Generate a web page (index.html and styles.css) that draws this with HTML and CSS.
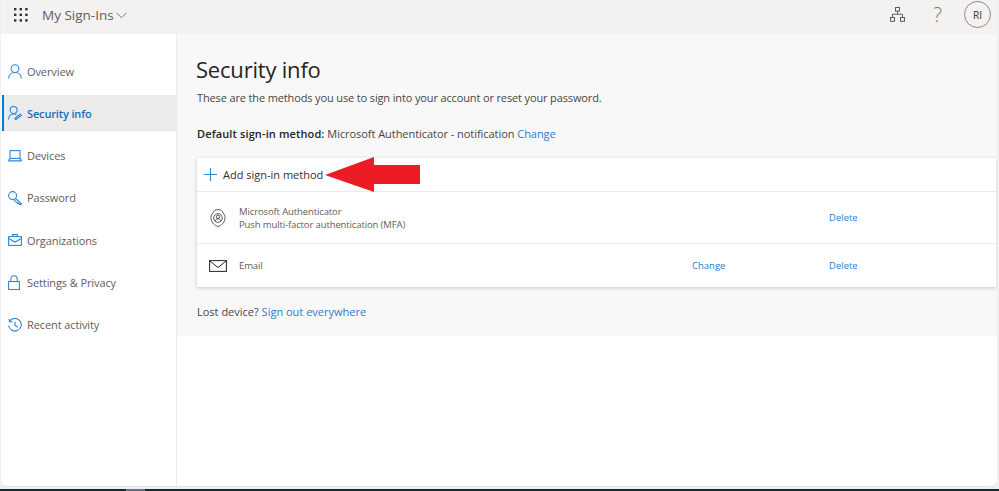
FILE: index.html
```html
<!DOCTYPE html>
<html lang="en">
<head>
    <meta charset="UTF-8">
    <meta name="viewport" content="width=device-width, initial-scale=1.0">
    <title>My Sign-Ins</title>
    <link rel="stylesheet" href="styles.css">
</head>
<body>
    <div class="window">
        <header class="topbar">
            <svg class="waffle" width="14" height="14" viewBox="0 0 14 14" fill="#323130">
                <rect x="0" y="0" width="2.4" height="2.4"/><rect x="5.6" y="0" width="2.4" height="2.4"/><rect x="11.2" y="0" width="2.4" height="2.4"/>
                <rect x="0" y="5.6" width="2.4" height="2.4"/><rect x="5.6" y="5.6" width="2.4" height="2.4"/><rect x="11.2" y="5.6" width="2.4" height="2.4"/>
                <rect x="0" y="11.2" width="2.4" height="2.4"/><rect x="5.6" y="11.2" width="2.4" height="2.4"/><rect x="11.2" y="11.2" width="2.4" height="2.4"/>
            </svg>
            <span class="app-name">My Sign-Ins</span>
            <svg class="chevron" width="11" height="7" viewBox="0 0 11 7" fill="none" stroke="#797775"><path d="M.6.8l4.9 4.9L10.4.8"/></svg>
            <div class="topbar-right">
                <svg width="15" height="15" viewBox="0 0 15 15" fill="none" stroke="#605e5c">
                    <rect x="5.5" y=".5" width="4" height="3.6"/><rect x=".5" y="10.5" width="4" height="3.8"/><rect x="10.5" y="10.5" width="4" height="3.8"/>
                    <path d="M7.5 4v3.2M2.5 10.5V7.2h10v3.3"/>
                </svg>
                <span class="help">?</span>
                <span class="avatar">RI</span>
            </div>
        </header>
        <div class="layout">
            <nav class="sidebar">
                <a class="nav-item">
                    <span class="nav-icon"><svg width="14" height="15" viewBox="0 0 14 15" fill="none" stroke="#2b88d8" stroke-width="1.1"><circle cx="7" cy="4.6" r="3.9"/><path d="M.7 14.5c0-3.6 2.600-6 6.300-6s6.300 2.400 6.300 6"/></svg></span>
                    Overview
                </a>
                <a class="nav-item active">
                    <span class="nav-icon"><svg width="15" height="15" viewBox="0 0 15 15" fill="none" stroke="#2b88d8" stroke-width="1.1"><circle cx="5.600" cy="4" r="3.500"/><path d="M.6 13.500c0-3.200 2-5.500 5-5.500 1.200 0 2.200.3 3 .9M7.500 13.800l6.500-4.800M7.500 13.800l-.5-1.500 5.800-4.500"/></svg></span>
                    Security info
                </a>
                <a class="nav-item">
                    <span class="nav-icon"><svg width="14" height="12" viewBox="0 0 14 12" fill="none" stroke="#2b88d8" stroke-width="1.1"><rect x="2" y=".6" width="10" height="7.800"/><path d="M.5 10.900h13M2 8.400L.5 10.900M12 8.400l1.500 2.500"/></svg></span>
                    Devices
                </a>
                <a class="nav-item">
                    <span class="nav-icon"><svg width="14" height="14" viewBox="0 0 14 14" fill="none" stroke="#2b88d8" stroke-width="1.1"><circle cx="4.600" cy="4.600" r="4"/><path d="M7.500 7.500l5.800 5.300v.6h-1.800l-1-1-.8.100-.3-1.100-.9-.1-2.500-2.400"/></svg></span>
                    Password
                </a>
                <a class="nav-item">
                    <span class="nav-icon"><svg width="14" height="12" viewBox="0 0 14 12" fill="none" stroke="#2b88d8" stroke-width="1.1"><rect x=".6" y="2.600" width="12.800" height="8.800"/><path d="M4.600 2.600V.6h4.800v2M.6 4.500L7 8l6.400-3.500"/></svg></span>
                    Organizations
                </a>
                <a class="nav-item">
                    <span class="nav-icon"><svg width="12" height="15" viewBox="0 0 12 15" fill="none" stroke="#2b88d8" stroke-width="1.1"><rect x=".6" y="6.500" width="10.800" height="8"/><path d="M2.800 6.500V4a3.200 3.200 0 0 1 6.400 0v2.500"/></svg></span>
                    Settings &amp; Privacy
                </a>
                <a class="nav-item">
                    <span class="nav-icon"><svg width="14" height="14" viewBox="0 0 14 14" fill="none" stroke="#2b88d8" stroke-width="1.1"><path d="M1.900 3a6.300 6.300 0 1 1-1.200 4.500M.9 .8l.6 3h3M7 3.500V7.300l2.600 1.900"/></svg></span>
                    Recent activity
                </a>
            </nav>
            <main class="content">
                <section class="summary">
                    <h1>Security info</h1>
                    <p class="intro">These are the methods you use to sign into your account or reset your password.</p>
                    <p class="default"><b>Default sign-in method:</b> Microsoft Authenticator - notification <a class="link">Change</a></p>
                    <div class="card">
                        <div class="add-row">
                            <svg width="13" height="13" viewBox="0 0 13 13" stroke="#2b88d8" stroke-width="1.1"><path d="M6.500 0v13M0 6.500h13"/></svg>
                            <span>Add sign-in method</span>
                        </div>
                        <div class="method method-tall">
                            <svg class="method-icon" width="18" height="18" viewBox="0 0 18 18" fill="none" stroke="#484644" stroke-width=".9"><path d="M9 .6C6.300.6 4.400 2 4 4 2.500 5.400 2 7 2 8.700c0 2.800 1.500 5.300 3.500 7 1 .9 2.300 1.700 3.500 1.700s2.500-.8 3.500-1.700c2-1.700 3.500-4.200 3.500-7 0-1.700-.5-3.300-2-4.700C13.600 2 11.700.6 9 .6z"/><circle cx="9" cy="9" r="4.300"/><circle cx="9" cy="7.800" r="1.700"/><path d="M6 12c.5-1.400 1.700-2.200 3-2.200s2.500.8 3 2.200"/></svg>
                            <div class="method-text">
                                <div>Microsoft Authenticator</div>
                                <div>Push multi-factor authentication (MFA)</div>
                            </div>
                            <a class="link small delete">Delete</a>
                        </div>
                        <div class="method method-short">
                            <svg class="method-icon" width="18" height="12" viewBox="0 0 18 12" fill="none" stroke="#252423"><rect x=".6" y=".6" width="16.800" height="10.800"/><path d="M.6.8L9 7.500 17.400.8"/></svg>
                            <div class="method-text">Email</div>
                            <a class="link small change">Change</a>
                            <a class="link small delete">Delete</a>
                        </div>
                    </div>
                    <p class="lost">Lost device? <a class="link">Sign out everywhere</a></p>
                </section>
            </main>
        </div>
        <svg class="arrow" width="95" height="35" viewBox="0 0 95 35" fill="#ed1c24"><path d="M0 18L49 0v8h46v19H49v8z"/></svg>
    </div>
    <div class="taskbar"><span class="taskbar-app"></span></div>
</body>
</html>
```

FILE: styles.css
```css
html, body {
    margin: 0;
    height: 100%;
}
body {
    font-family: "Open Sans", "Noto Sans", sans-serif;
    color: #323130;
    background-color: #f0f0f0;
    display: flex;
    flex-direction: column;
    overflow: hidden;
}
.window {
    position: relative;
    flex: 1;
    min-height: 0;
    display: flex;
    flex-direction: column;
    margin: 0 2px 2px 1px;
    border-bottom: 1px solid #e4e4e4;
    border-radius: 0 0 6px 6px;
    background-color: #fff;
    overflow: hidden;
}
.taskbar {
    height: 2px;
    padding-left: 126px;
    background-color: #17262f;
}
.taskbar-app {
    display: block;
    width: 19px;
    height: 2px;
    background-color: #5f7380;
}
.topbar {
    height: 29px;
    padding-bottom: 5px;
    flex-shrink: 0;
    display: flex;
    align-items: center;
    background-color: #f3f2f1;
}
.waffle {
    margin-left: 13px;
}
.app-name {
    margin-left: 14px;
    font-size: 13.5px;
    color: #605e5c;
}
.chevron {
    margin-left: 2px;
    margin-top: 2px;
}
.topbar-right {
    margin-left: auto;
    margin-right: 6px;
    display: flex;
    align-items: center;
}
.help {
    margin-left: 29px;
    font-size: 20px;
    font-weight: 300;
    color: #797775;
}
.avatar {
    margin-left: 22px;
    width: 25px;
    height: 25px;
    border: 1px solid #8a8886;
    border-radius: 50%;
    display: flex;
    align-items: center;
    justify-content: center;
    font-size: 10px;
    color: #323130;
}
.layout {
    flex: 1;
    display: flex;
    min-height: 0;
}
.sidebar {
    width: 175px;
    flex-shrink: 0;
    padding-top: 19px;
    border-right: 1px solid #edebe9;
}
.nav-item {
    height: 36px;
    margin-bottom: 6.300px;
    padding-left: 7px;
    display: flex;
    align-items: center;
    gap: 5px;
    font-size: 11px;
    letter-spacing: -0.1px;
    color: #605e5c;
}
.nav-icon {
    flex: 0 0 14px;
    display: flex;
    align-items: center;
}
.nav-item.active {
    margin-left: 1px;
    padding-left: 4px;
    gap: 4px;
    border-left: 2px solid #0078d4;
    background-color: #edebe9;
    font-weight: 600;
    letter-spacing: -0.15px;
    color: #106ebe;
}
.content {
    flex: 1;
    min-width: 0;
}
.summary {
    height: 302px;
    padding: 19px 1px 0 20px;
    box-sizing: border-box;
    background-color: #f8f8f8;
}
h1 {
    margin: 0 0 0 -1px;
    font-size: 22px;
    line-height: 32px;
    font-weight: 400;
    letter-spacing: -0.2px;
    color: #252423;
}
.intro {
    margin: 3px 0 0;
    font-size: 11px;
    line-height: 20px;
    letter-spacing: -0.135px;
    color: #484644;
}
.default {
    margin: 16px 0 0;
    font-size: 11px;
    line-height: 20px;
    letter-spacing: -0.05px;
    color: #484644;
}
.default b {
    font-weight: 600;
    letter-spacing: 0.12px;
    color: #252423;
}
.link {
    color: #2b7cd3;
}
.small {
    font-size: 9.500px;
    letter-spacing: 0;
}
.card {
    margin-top: 14px;
    background-color: #fff;
    box-shadow: 0 1px 4px rgba(0, 0, 0, 0.2);
}
.add-row {
    height: 33px;
    padding-left: 7px;
    display: flex;
    align-items: center;
    gap: 6px;
    font-size: 11px;
    border-bottom: 1px solid #edebe9;
}
.method {
    display: flex;
    align-items: center;
    padding-left: 12px;
    font-size: 9.500px;
    line-height: 13px;
    letter-spacing: -0.12px;
    color: #605e5c;
}
.method-tall {
    height: 51px;
    border-bottom: 1px solid #edebe9;
}
.method-short {
    height: 43px;
}
.method-icon {
    flex: 0 0 auto;
    width: 18px;
}
.method-text {
    margin-left: 12px;
    width: 453px;
}
.change {
    width: 137px;
}
.method-tall .delete {
    margin-left: 137px;
}
.lost {
    margin: 15px 0 0;
    font-size: 11px;
    line-height: 20px;
    color: #484644;
}
.arrow {
    position: absolute;
    left: 324px;
    top: 157px;
}
```
